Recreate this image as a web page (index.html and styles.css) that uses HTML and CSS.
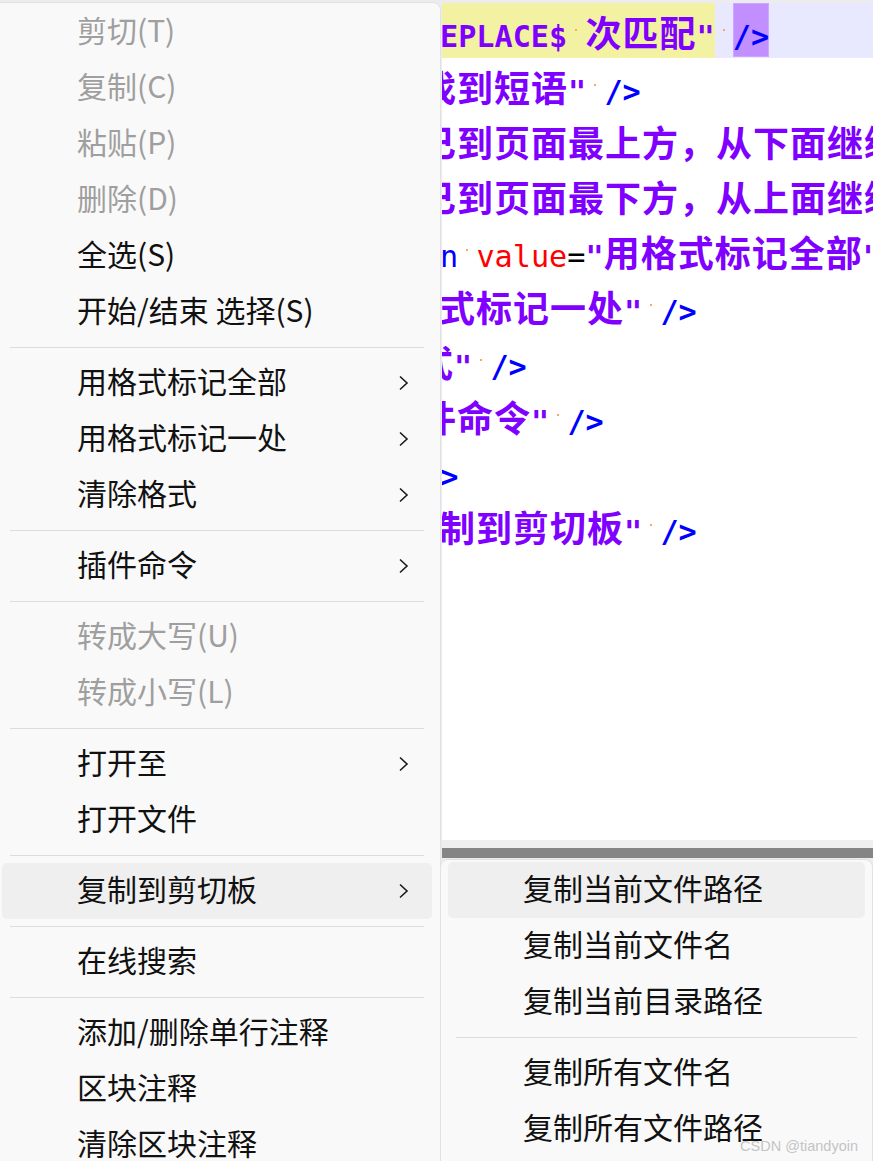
FILE: index.html
```html
<!DOCTYPE html>
<html lang="zh-CN">
<head>
  <meta charset="UTF-8">
  <title>右键菜单</title>
  <link rel="stylesheet" href="styles.css">
</head>
<body>

<!-- Editor behind the menus -->
<div class="editor">
  <div class="code">
    <div class="line cur l-a">
      <div class="found">
        <span class="m s">EPLACE$</span><span class="m sp"> </span><span class="c">次匹配</span><span class="m s">"</span>
      </div>
      <span class="m sp"> </span><span class="m t box">/&gt;</span>
    </div>
    <div class="line l-b">
      <span class="c">找到短语</span><span class="m s">"</span><span class="m sp"> </span><span class="m t">/&gt;</span>
    </div>
    <div class="line l-b">
      <span class="c">已到页面最上方，从下面继续查找</span>
    </div>
    <div class="line l-b">
      <span class="c">已到页面最下方，从上面继续查找</span>
    </div>
    <div class="line l-a">
      <span class="m n">n</span><span class="m sp"> </span><span class="m attr">value</span><span class="m eq">=</span><span class="m s">"</span><span class="c">用格式标记全部</span><span class="m s">"</span>
    </div>
    <div class="line l-c">
      <span class="c">式标记一处</span><span class="m s">"</span><span class="m sp"> </span><span class="m t">/&gt;</span>
    </div>
    <div class="line l-d">
      <span class="c">式</span><span class="m s">"</span><span class="m sp"> </span><span class="m t">/&gt;</span>
    </div>
    <div class="line l-b">
      <span class="c">件命令</span><span class="m s">"</span><span class="m sp"> </span><span class="m t">/&gt;</span>
    </div>
    <div class="line l-e">
      <span class="m t">/&gt;</span>
    </div>
    <div class="line l-c">
      <span class="c">制到剪切板</span><span class="m s">"</span><span class="m sp"> </span><span class="m t">/&gt;</span>
    </div>
  </div>
  <div class="scroll-gap"></div>
  <div class="scroll-bar"></div>
</div>

<!-- Context menu -->
<div class="menu main">
  <div class="item off">剪切(T)</div>
  <div class="item off">复制(C)</div>
  <div class="item off">粘贴(P)</div>
  <div class="item off">删除(D)</div>
  <div class="item">全选(S)</div>
  <div class="item">开始/结束 选择(S)</div>
  <div class="sep"></div>
  <div class="item">用格式标记全部<svg class="arrow" viewBox="0 0 11 16"><polyline points="2,1.5 9,8 2,14.5"/></svg></div>
  <div class="item">用格式标记一处<svg class="arrow" viewBox="0 0 11 16"><polyline points="2,1.5 9,8 2,14.5"/></svg></div>
  <div class="item">清除格式<svg class="arrow" viewBox="0 0 11 16"><polyline points="2,1.5 9,8 2,14.5"/></svg></div>
  <div class="sep"></div>
  <div class="item">插件命令<svg class="arrow" viewBox="0 0 11 16"><polyline points="2,1.5 9,8 2,14.5"/></svg></div>
  <div class="sep"></div>
  <div class="item off">转成大写(U)</div>
  <div class="item off">转成小写(L)</div>
  <div class="sep"></div>
  <div class="item">打开至<svg class="arrow" viewBox="0 0 11 16"><polyline points="2,1.5 9,8 2,14.5"/></svg></div>
  <div class="item">打开文件</div>
  <div class="sep"></div>
  <div class="item hot">复制到剪切板<svg class="arrow" viewBox="0 0 11 16"><polyline points="2,1.5 9,8 2,14.5"/></svg></div>
  <div class="sep"></div>
  <div class="item">在线搜索</div>
  <div class="sep"></div>
  <div class="item">添加/删除单行注释</div>
  <div class="item">区块注释</div>
  <div class="item">清除区块注释</div>
</div>

<!-- Sub menu -->
<div class="menu sub">
  <div class="item hot">复制当前文件路径</div>
  <div class="item">复制当前文件名</div>
  <div class="item">复制当前目录路径</div>
  <div class="sep"></div>
  <div class="item">复制所有文件名</div>
  <div class="item">复制所有文件路径</div>
</div>

<div class="watermark">CSDN @tiandyoin</div>

</body>
</html>
```

FILE: styles.css
```css
body {
  margin: 0;
  background-color: #ebebf0;
  overflow: hidden;
  height: 1161px;
}

/* ---------- editor ---------- */

.editor {
  margin-left: 442px;
  padding-top: 3px;
}

.code {
  height: 837px;
  background-color: #ffffff;
  overflow: hidden;
}

.line {
  display: flex;
  height: 55px;
  white-space: pre;
}

.line > span,
.found > span {
  display: block;
  box-sizing: border-box;
  height: 55px;
}

.l-a { margin-left: -2px; }
.l-b { margin-left: -22px; }
.l-c { margin-left: -3px; }
.l-d { margin-left: -25px; }
.l-e { margin-left: -20px; }

.cur {
  background-color: #e8e8ff;
}

.found {
  display: flex;
  background-color: #f2f2a2;
}

.m {
  font-family: "DejaVu Sans Mono", monospace;
  font-size: 30.2px;
  line-height: 36px;
  padding-top: 16px;
}

.c {
  font-family: "Noto Sans CJK SC", sans-serif;
  font-weight: bold;
  font-size: 36px;
  letter-spacing: 1px;
  line-height: 52px;
  padding-top: 2px;
  color: #8000ff;
}

.s {
  font-weight: bold;
  color: #8000ff;
}

.t {
  font-weight: bold;
  color: #0000ff;
}

.n {
  color: #0000ff;
}

.attr {
  color: #ff0000;
}

.eq {
  color: #000000;
}

.sp {
  background: linear-gradient(#f8a860, #f8a860) no-repeat;
  background-size: 2px 2px;
  background-position: 8px 26px;
}

.box {
  background-color: #c18fff;
  box-shadow: inset 0 0 0 1px #cda6ff;
  height: 54px !important;
}

.scroll-gap {
  height: 8px;
  background-color: #efefef;
}

.scroll-bar {
  height: 10px;
  background-color: #858585;
}

/* ---------- menus ---------- */

.menu {
  position: absolute;
  box-sizing: border-box;
  background-color: #f9f9f9;
  border: 1px solid #e2e2e2;
  border-radius: 8px;
  font-family: "Noto Sans CJK SC", sans-serif;
  font-size: 30px;
  color: #111111;
}

.main {
  left: -6px;
  top: 2px;
  width: 447px;
  height: 1200px;
  padding: 1px 8px 0 7px;
}

.sub {
  left: 440px;
  top: 859px;
  width: 433px;
  height: 320px;
  padding: 2px 7px 0 7px;
}

.item {
  display: flex;
  align-items: flex-start;
  height: 56px;
  line-height: 50px;
  padding-left: 75px;
  padding-right: 23px;
  border-radius: 5px;
  white-space: pre;
}

.item.off {
  color: #9f9f9f;
}

.item.hot {
  background-color: #efefef;
}

.sep {
  height: 1px;
  margin: 7px 8px;
  background-color: #dcdcdc;
}

.arrow {
  width: 11px;
  height: 16px;
  margin-left: auto;
  align-self: center;
  fill: none;
  stroke: #1a1a1a;
  stroke-width: 1.6;
}

.watermark {
  position: absolute;
  right: 15px;
  bottom: 7px;
  font-family: "Liberation Sans", Arial, sans-serif;
  font-size: 14.5px;
  color: #c4c4c4;
}
```
